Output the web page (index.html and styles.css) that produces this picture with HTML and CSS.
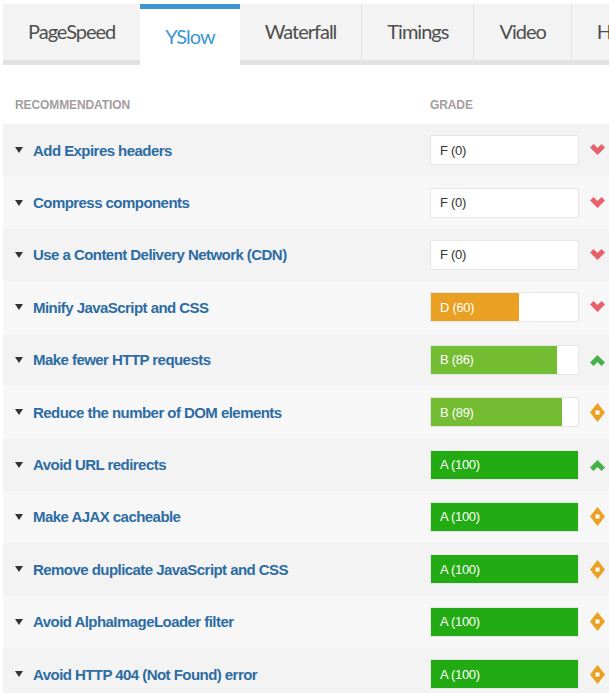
FILE: index.html
```html
<!DOCTYPE html>
<html lang="en">
<head>
<meta charset="utf-8">
<title>YSlow</title>
<link rel="stylesheet" href="styles.css">
</head>
<body>
<div class="page">
  <nav class="tabs">
    <div class="tab">PageSpeed</div>
    <div class="tab active">YSlow</div>
    <div class="tab">Waterfall</div>
    <div class="tab sep">Timings</div>
    <div class="tab sep">Video</div>
    <div class="tab sep">History</div>
  </nav>

  <div class="head">
    <div class="h-rec">RECOMMENDATION</div>
    <div class="h-grade">GRADE</div>
  </div>

  <div class="rows">
    <div class="row"><div class="title"><span class="tri"></span>Add Expires headers</div><div class="grade"><div class="fill" style="width:0%"></div><span class="gt">F (0)</span></div><div class="ic"><svg class="chev red" viewBox="0 0 15 12"><path d="M0 3.5 L3.5 0 L7.5 4 L11.5 0 L15 3.5 L7.5 11 Z"/></svg></div></div>
    <div class="row"><div class="title"><span class="tri"></span>Compress components</div><div class="grade"><div class="fill" style="width:0%"></div><span class="gt">F (0)</span></div><div class="ic"><svg class="chev red" viewBox="0 0 15 12"><path d="M0 3.5 L3.5 0 L7.5 4 L11.5 0 L15 3.5 L7.5 11 Z"/></svg></div></div>
    <div class="row"><div class="title"><span class="tri"></span>Use a Content Delivery Network (CDN)</div><div class="grade"><div class="fill" style="width:0%"></div><span class="gt">F (0)</span></div><div class="ic"><svg class="chev red" viewBox="0 0 15 12"><path d="M0 3.5 L3.5 0 L7.5 4 L11.5 0 L15 3.5 L7.5 11 Z"/></svg></div></div>
    <div class="row"><div class="title"><span class="tri"></span>Minify JavaScript and CSS</div><div class="grade"><div class="fill d" style="width:60%"></div><span class="gt light">D (60)</span></div><div class="ic"><svg class="chev red" viewBox="0 0 15 12"><path d="M0 3.5 L3.5 0 L7.5 4 L11.5 0 L15 3.5 L7.5 11 Z"/></svg></div></div>
    <div class="row"><div class="title"><span class="tri"></span>Make fewer HTTP requests</div><div class="grade"><div class="fill b" style="width:86%"></div><span class="gt light">B (86)</span></div><div class="ic"><svg class="chev green" viewBox="0 0 15 12"><path d="M0 8.5 L3.5 12 L7.5 8 L11.5 12 L15 8.5 L7.5 1 Z"/></svg></div></div>
    <div class="row"><div class="title"><span class="tri"></span>Reduce the number of DOM elements</div><div class="grade"><div class="fill b" style="width:89%"></div><span class="gt light">B (89)</span></div><div class="ic"><svg class="dia" viewBox="0 0 15 19"><path d="M7.5 0 L15 9.5 L7.5 19 L0 9.5 Z"/><rect x="5.5" y="7.5" width="4" height="4" fill="#fff"/></svg></div></div>
    <div class="row"><div class="title"><span class="tri"></span>Avoid URL redirects</div><div class="grade"><div class="fill a" style="width:100%"></div><span class="gt light">A (100)</span></div><div class="ic"><svg class="chev green" viewBox="0 0 15 12"><path d="M0 8.5 L3.5 12 L7.5 8 L11.5 12 L15 8.5 L7.5 1 Z"/></svg></div></div>
    <div class="row"><div class="title"><span class="tri"></span>Make AJAX cacheable</div><div class="grade"><div class="fill a" style="width:100%"></div><span class="gt light">A (100)</span></div><div class="ic"><svg class="dia" viewBox="0 0 15 19"><path d="M7.5 0 L15 9.5 L7.5 19 L0 9.5 Z"/><rect x="5.5" y="7.5" width="4" height="4" fill="#fff"/></svg></div></div>
    <div class="row"><div class="title"><span class="tri"></span>Remove duplicate JavaScript and CSS</div><div class="grade"><div class="fill a" style="width:100%"></div><span class="gt light">A (100)</span></div><div class="ic"><svg class="dia" viewBox="0 0 15 19"><path d="M7.5 0 L15 9.5 L7.5 19 L0 9.5 Z"/><rect x="5.5" y="7.5" width="4" height="4" fill="#fff"/></svg></div></div>
    <div class="row"><div class="title"><span class="tri"></span>Avoid AlphaImageLoader filter</div><div class="grade"><div class="fill a" style="width:100%"></div><span class="gt light">A (100)</span></div><div class="ic"><svg class="dia" viewBox="0 0 15 19"><path d="M7.5 0 L15 9.5 L7.5 19 L0 9.5 Z"/><rect x="5.5" y="7.5" width="4" height="4" fill="#fff"/></svg></div></div>
    <div class="row"><div class="title"><span class="tri"></span>Avoid HTTP 404 (Not Found) error</div><div class="grade"><div class="fill a" style="width:100%"></div><span class="gt light">A (100)</span></div><div class="ic"><svg class="dia" viewBox="0 0 15 19"><path d="M7.5 0 L15 9.5 L7.5 19 L0 9.5 Z"/><rect x="5.5" y="7.5" width="4" height="4" fill="#fff"/></svg></div></div>
  </div>
</div>
</body>
</html>
```

FILE: styles.css
```css
html, body {
  margin: 0;
  padding: 0;
  background: #ffffff;
  overflow: hidden;
}

.page {
  padding: 4px 0 0 3px;
  width: 700px;
  font-family: "Liberation Sans", Arial, sans-serif;
}

/* tabs */
.tabs {
  display: flex;
  height: 61px;
}

.tab {
  flex: none;
  box-sizing: border-box;
  height: 61px;
  padding: 0 25px 3px;
  background: #f3f3f3;
  border-bottom: 5px solid #e2e2e2;
  font-family: Lato, "Open Sans", sans-serif;
  font-size: 20px;
  letter-spacing: -1px;
  color: #4d4d4d;
  display: flex;
  align-items: center;
}

.tab.sep {
  border-left: 1px solid #e3e3e3;
}

.tab.active {
  background: #ffffff;
  border-bottom: none;
  border-top: 5px solid #3e96d1;
  color: #3e96d1;
}

/* header */
.head {
  display: grid;
  grid-template-columns: 415px 150px;
  padding: 32px 0 11px 12px;
  line-height: 16px;
  font-size: 12px;
  font-weight: bold;
  color: #a39d9f;
  letter-spacing: -0.1px;
}

/* rows */
.row {
  display: grid;
  grid-template-columns: 415px 149px 1fr;
  align-items: center;
  height: 52.4px;
  padding-left: 12px;
  background: #f3f3f3;
}

.row:nth-child(even) {
  background: #f7f7f7;
}

.title {
  display: flex;
  align-items: center;
  font-size: 15px;
  font-weight: bold;
  letter-spacing: -0.55px;
  color: #2c6ca3;
}

.tri {
  width: 0;
  height: 0;
  border-left: 4px solid transparent;
  border-right: 4px solid transparent;
  border-top: 6px solid #333333;
  margin-right: 10px;
}

.grade {
  position: relative;
  box-sizing: border-box;
  height: 30px;
  background: #ffffff;
  border: 1px solid #e6e6e6;
  display: flex;
  align-items: center;
}

.fill {
  position: absolute;
  left: 0;
  top: 0;
  bottom: 0;
}

.fill.d { background: #e9a023; }
.fill.b { background: #74bc31; }
.fill.a { background: #22ab13; }

.gt {
  position: relative;
  padding-left: 9px;
  font-size: 13px;
  letter-spacing: -0.3px;
  color: #333333;
}

.gt.light {
  color: #ffffff;
}

.ic {
  padding-left: 11px;
  display: flex;
  align-items: center;
}

.chev {
  width: 15px;
  height: 12px;
}

.chev.red { fill: #e8606a; }
.chev.green { fill: #46b049; }

.dia {
  width: 15px;
  height: 19px;
  fill: #e9a023;
}
```
